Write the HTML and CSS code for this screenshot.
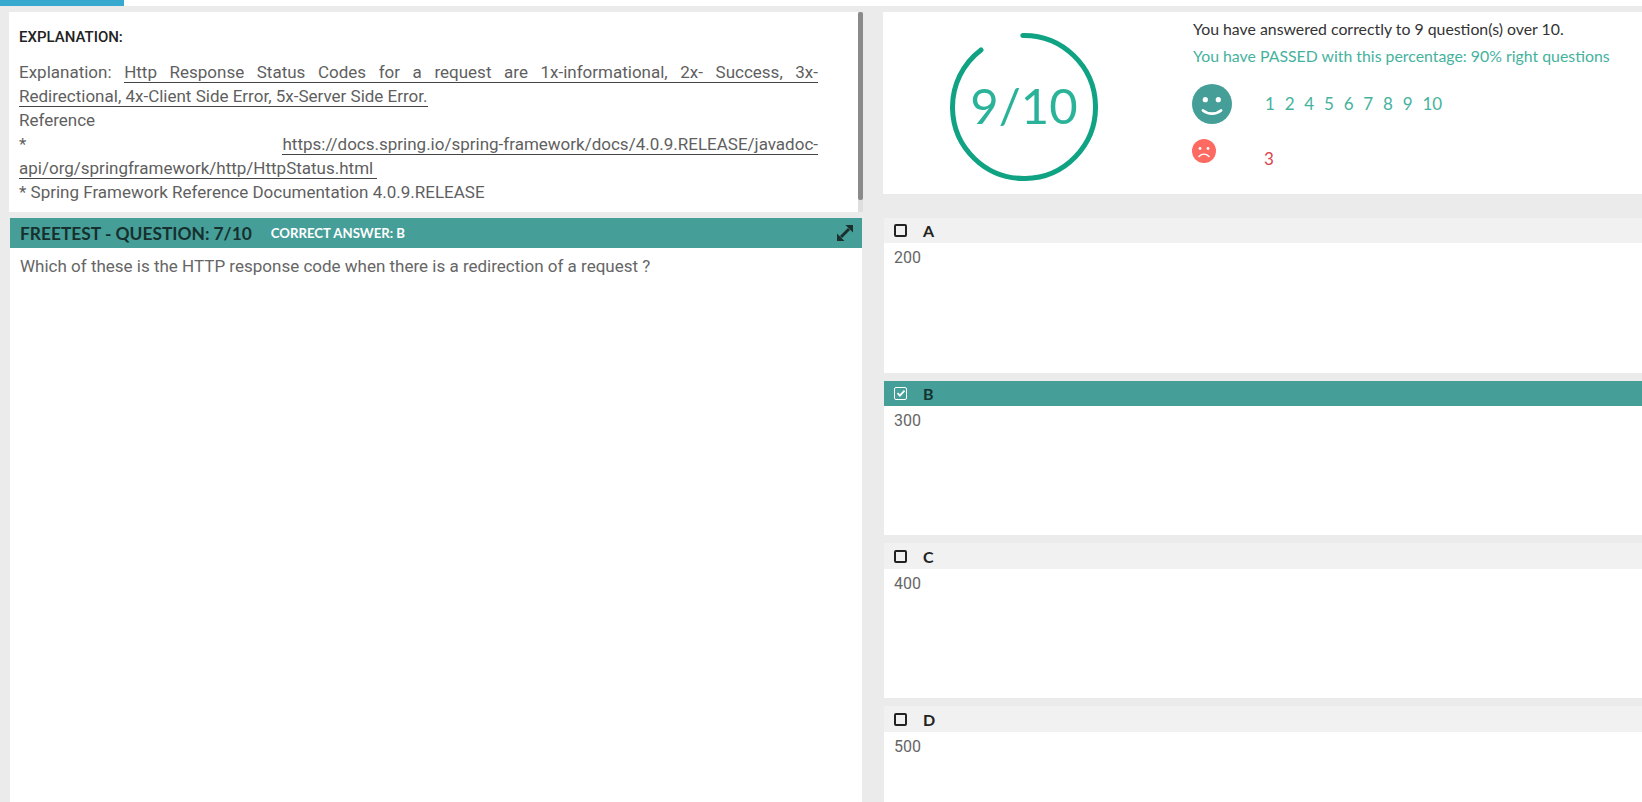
FILE: index.html
```html
<!DOCTYPE html>
<html lang="en">
<head>
<meta charset="utf-8">
<title>Freetest result</title>
<link rel="stylesheet" href="styles.css">
</head>
<body>
<div class="topbar"><div class="progress"></div></div>
<main class="layout">
  <section class="left">
    <div class="explain">
      <div class="explain-body">
        <h2 class="explain-title">EXPLANATION:</h2>
        <p class="explain-text">Explanation: <span class="ul">Http Response Status Codes for a request are 1x-informational, 2x- Success, 3x-Redirectional, 4x-Client Side Error, 5x-Server Side Error.</span><br>Reference<br>* <span class="ul">https://docs.spring.io/spring-framework/docs/4.0.9.RELEASE/javadoc-api/org/springframework/http/HttpStatus.html&nbsp;</span><br>* Spring Framework Reference Documentation 4.0.9.RELEASE</p>
      </div>
      <div class="scrollbar"><div class="thumb"></div></div>
    </div>
    <div class="question">
      <header class="q-head">
        <span class="q-title">FREETEST - QUESTION: 7/10</span>
        <span class="q-answer">CORRECT ANSWER: B</span>
        <svg class="q-expand" viewBox="0 0 16 16" width="16" height="16" aria-hidden="true">
          <path d="M16 0v7.5L8.5 0zM0 16V8.5L7.5 16z" fill="#1b2f2e"/>
          <path d="M4 12l8-8" stroke="#1b2f2e" stroke-width="3"/>
        </svg>
      </header>
      <p class="q-text">Which of these is the HTTP response code when there is a redirection of a request ?</p>
    </div>
  </section>
  <section class="right">
    <div class="result">
      <div class="gauge">
        <svg class="gauge-ring" viewBox="0 0 150 150" width="150" height="150" aria-hidden="true">
          <circle class="gauge-arc" cx="75" cy="75" r="71.5" transform="rotate(-91 75 75)" pathLength="100"/>
        </svg>
        <span class="gauge-label">9/10</span>
      </div>
      <div class="summary">
        <p class="sum-line">You have answered correctly to 9 question(s) over 10.</p>
        <p class="sum-pass">You have PASSED with this percentage: 90% right questions</p>
        <div class="row-good">
          <svg class="face-good" viewBox="0 0 40 40" width="40" height="40" aria-hidden="true">
            <circle cx="20" cy="20" r="20" fill="#469e98"/>
            <circle cx="13.3" cy="15.7" r="2.6" fill="#fff"/>
            <circle cx="26.3" cy="15.7" r="2.6" fill="#fff"/>
            <path d="M11 26.5c5 4.2 13 4.2 18 0" fill="none" stroke="#fff" stroke-width="2.8" stroke-linecap="round"/>
          </svg>
          <div class="nums good"><span>1</span><span>2</span><span>4</span><span>5</span><span>6</span><span>7</span><span>8</span><span>9</span><span>10</span></div>
        </div>
        <div class="row-bad">
          <svg class="face-bad" viewBox="0 0 24 24" width="24" height="24" aria-hidden="true">
            <circle cx="12" cy="12" r="12" fill="#fd6a61"/>
            <circle cx="8" cy="9.5" r="1.4" fill="#fff"/>
            <circle cx="16" cy="9.5" r="1.4" fill="#fff"/>
            <path d="M7 17.5c3-3 7-3 10 0" fill="none" stroke="#fff" stroke-width="1.5" stroke-linecap="round"/>
          </svg>
          <div class="nums bad"><span>3</span></div>
        </div>
      </div>
    </div>
    <div class="options">
      <article class="option">
        <div class="opt-head"><span class="box"></span><span class="opt-letter">A</span></div>
        <div class="opt-body">200</div>
      </article>
      <article class="option selected">
        <div class="opt-head">
          <span class="box">
            <svg viewBox="0 0 10 10" width="10" height="10" aria-hidden="true"><path d="M1.5 5.2l2.4 2.4 4.6-5" fill="none" stroke="#fff" stroke-width="1.8"/></svg>
          </span>
          <span class="opt-letter">B</span>
        </div>
        <div class="opt-body">300</div>
      </article>
      <article class="option">
        <div class="opt-head"><span class="box"></span><span class="opt-letter">C</span></div>
        <div class="opt-body">400</div>
      </article>
      <article class="option last">
        <div class="opt-head"><span class="box"></span><span class="opt-letter">D</span></div>
        <div class="opt-body">500</div>
      </article>
    </div>
  </section>
</main>
</body>
</html>
```
FILE: styles.css
```css
* { box-sizing: border-box; }
html, body { margin: 0; height: 802px; overflow: hidden; }
body { background: #ebebeb; font-family: Roboto, "Liberation Sans", sans-serif; color: #5f5f5f; }

.topbar { height: 6px; background: #fff; }
.progress { width: 124px; height: 6px; background: #37a9cf; }

.layout { display: grid; grid-template-columns: 854px 759px; column-gap: 20px; height: 796px; padding: 6px 0 0 9px; }

.left { display: flex; flex-direction: column; gap: 6px; height: 790px; }
.explain { display: flex; height: 200px; background: #fff; }
.explain-body { flex: 1; padding: 16px 40px 0 10px; }
.explain-title { margin: 0; font-size: 15px; font-weight: 500; line-height: 18px; color: #222; }
.explain-text { margin: 14px 0 0; font-size: 17px; line-height: 24px; text-align: justify; }
.ul { border-bottom: 1px solid #444; }
.scrollbar { width: 5px; background: #dedede; }
.thumb { height: 188px; background: #8a8a8a; border-radius: 2px; }

.question { flex: 1; margin: 0 1px; background: #fff; }
.q-head { display: flex; align-items: center; height: 30px; padding: 0 9px 0 10px; background: #469e98; }
.q-title { font-family: Lato, sans-serif; font-size: 17.35px; font-weight: 700; color: #16302e; }
.q-answer { margin-left: 19px; font-family: Lato, sans-serif; font-size: 13.2px; font-weight: 700; color: #fff; }
.q-expand { margin-left: auto; }
.q-text { margin: 6px 0 0 10px; font-size: 17px; line-height: 24px; color: #666; }

.right { height: 790px; overflow: hidden; }
.result { display: flex; height: 182px; background: #fff; }
.gauge { position: relative; flex: none; width: 310px; padding: 20px 0 0 66px; }
.gauge-ring { display: block; }
.gauge-arc { fill: none; stroke: #0fa283; stroke-width: 5; stroke-linecap: round; stroke-dasharray: 90 10; }
.gauge-label { position: absolute; left: 66px; top: 18px; width: 150px; height: 150px; display: flex; align-items: center; justify-content: center; font-family: Lato, sans-serif; font-size: 49px; color: #2bb39a; }

.summary { font-family: Lato, sans-serif; padding-top: 6px; margin-left: -1px; }
.sum-line { margin: 0 0 0 1px; font-size: 15.85px; line-height: 22px; color: #333; }
.sum-pass { margin: 5px 0 0 1px; font-size: 15.85px; line-height: 22px; color: #45b29d; }
.row-good, .row-bad { display: flex; }
.row-good { margin-top: 17px; align-items: flex-start; }
.row-bad { margin-top: 15px; }
.face-good { margin-right: 33px; }
.face-bad { margin-right: 48px; }
.nums { display: flex; gap: 9.8px; font-size: 17px; line-height: 22px; }
.nums.good { color: #45b29d; padding-top: 9px; }
.nums.bad { color: #d9434e; padding-top: 9px; }

.options { display: flex; flex-direction: column; gap: 8px; margin: 23.7px 0 0 1px; }
.option { flex: none; height: 154.85px; background: #fff; }
.option.last { height: 96px; }
.opt-head { display: flex; align-items: center; height: 25.6px; padding-left: 10px; background: #f1f1f1; color: #222; }
.box { display: flex; align-items: center; justify-content: center; width: 13px; height: 13px; border: 2px solid #222; border-radius: 2px; }
.opt-letter { margin-left: 16px; font-family: Lato, sans-serif; font-size: 16px; font-weight: 700; }
.opt-body { padding: 3px 0 0 10px; font-size: 16px; line-height: 24px; color: #666; }
.selected .opt-head { background: #469e98; color: #143330; }
.selected .box { border-color: #fff; border-width: 1.5px; }
```
